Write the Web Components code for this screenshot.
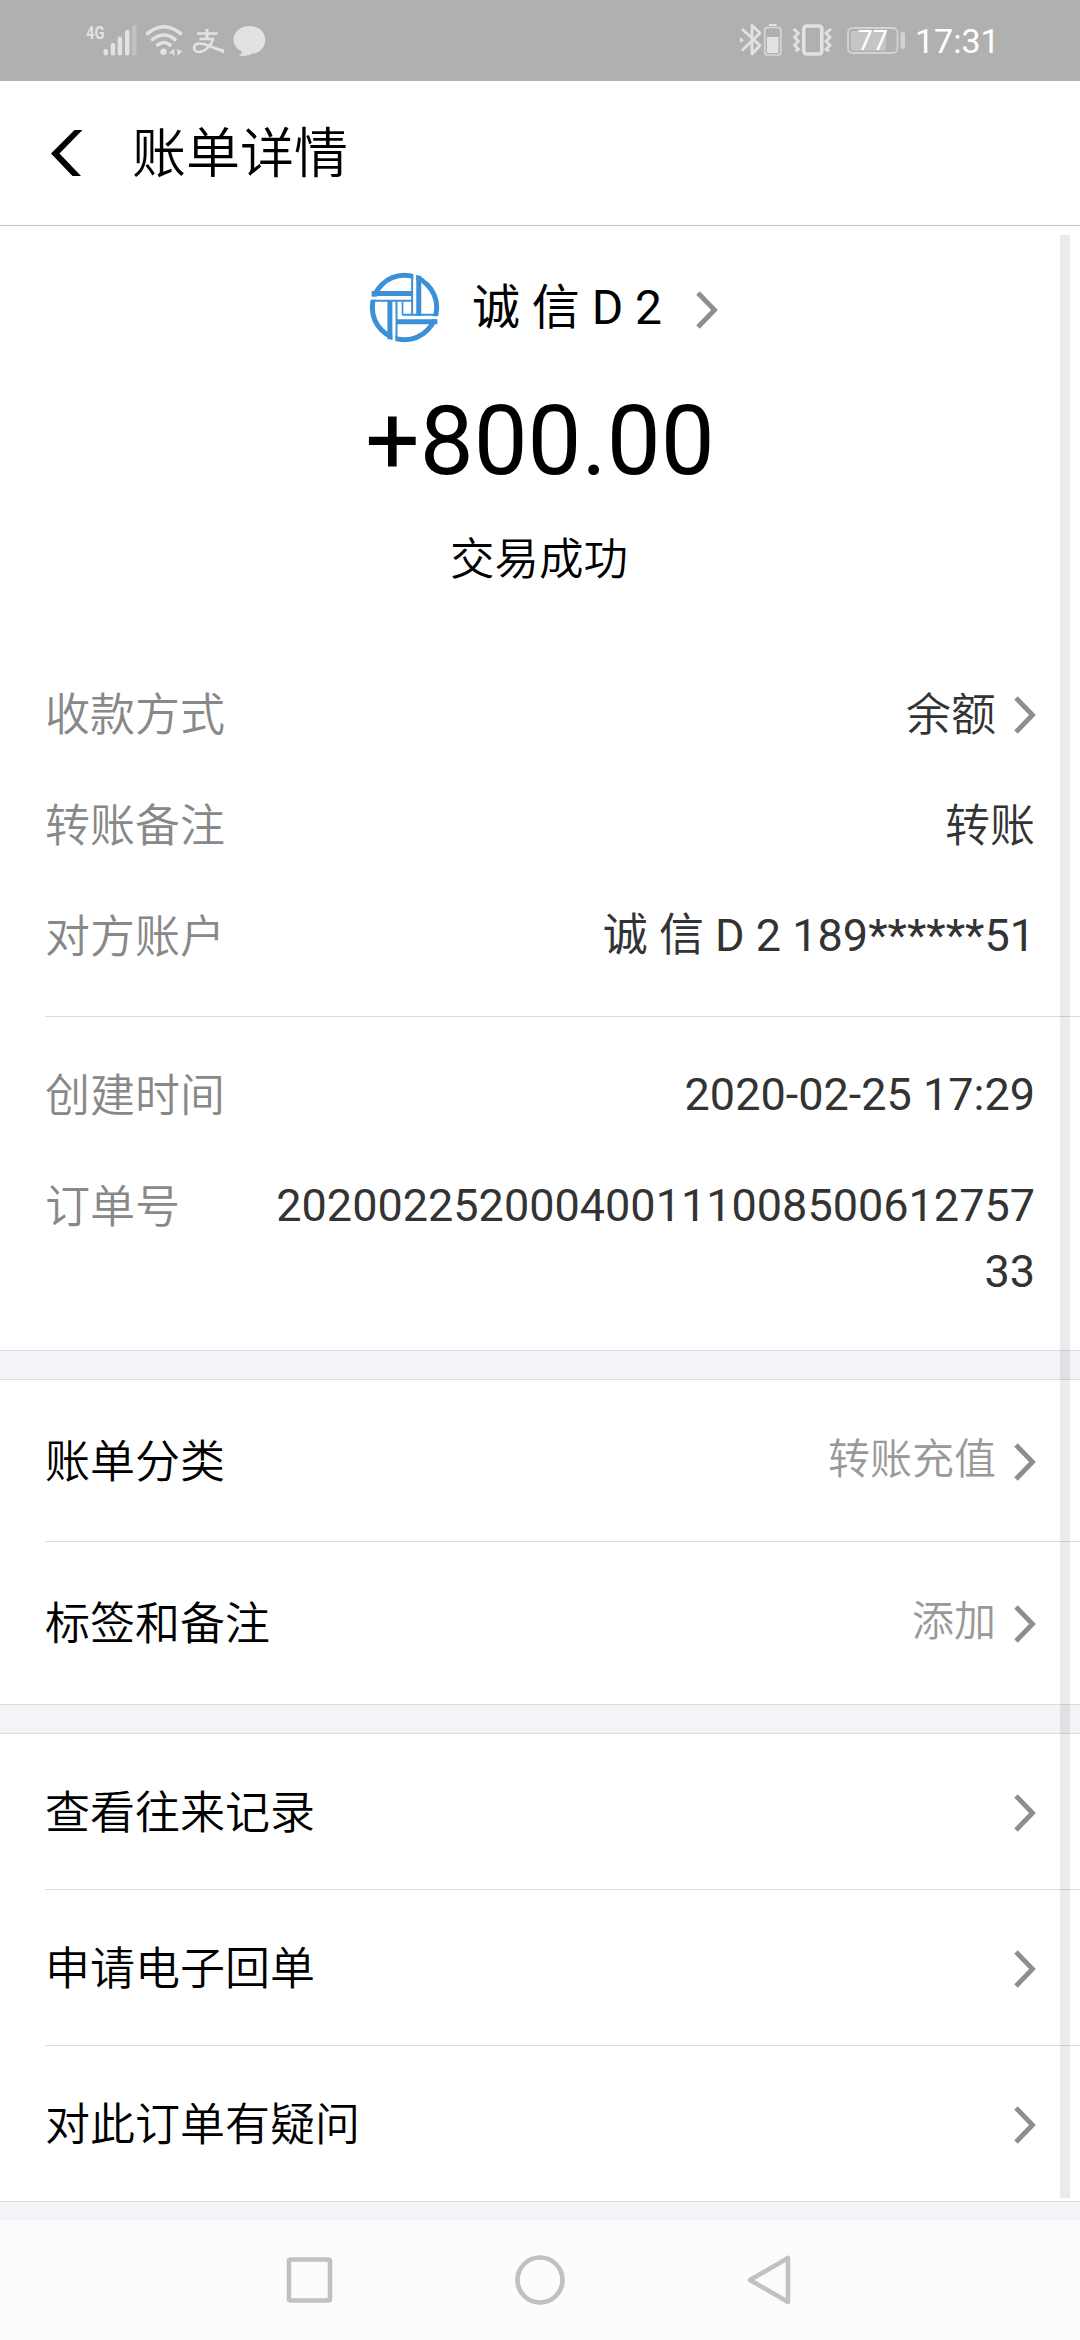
<!DOCTYPE html>
<html lang="zh-CN">
<head>
<meta charset="utf-8">
<title>账单详情</title>
<style>
    body {
        margin: 0;
        background: #fff;
        color: #000;
        font-family: Roboto, "Noto Sans CJK SC", sans-serif;
        font-size: 45px;
        line-height: 66px;
    }
</style>
</head>
<body>
<bill-page>
    <status-bar slot="top" time="17:31" battery="77"></status-bar>
    <page-header slot="top">账单详情</page-header>

    <bill-summary>
        <span slot="name">诚 信 D 2</span>
        <span slot="amount">+800.00</span>
        <span slot="state">交易成功</span>
    </bill-summary>

    <detail-group>
        <detail-row label="收款方式" link han>余额</detail-row>
        <detail-row label="转账备注" han>转账</detail-row>
        <detail-row label="对方账户">诚 信 D 2 189******51</detail-row>
    </detail-group>
    <detail-group last>
        <detail-row label="创建时间">2020-02-25 17:29</detail-row>
        <detail-row label="订单号">20200225200040011100850061275733</detail-row>
    </detail-group>

    <section-gap></section-gap>
    <cell-row tall label="账单分类">转账充值</cell-row>
    <cell-row tall last label="标签和备注">添加</cell-row>

    <section-gap></section-gap>
    <cell-row label="查看往来记录"></cell-row>
    <cell-row label="申请电子回单"></cell-row>
    <cell-row last label="对此订单有疑问"></cell-row>
    <section-gap open></section-gap>

    <nav-bar slot="bottom"></nav-bar>
</bill-page>

<script>
(function() {

    function makeTemplate(html) {
        const template = document.createElement('template');
        template.innerHTML = html;
        return template;
    }

    // shared base, clones the template of the subclass
    class BaseElement extends HTMLElement {
        constructor() {
            super();
            this.attachShadow({mode: 'open'});
            this.shadowRoot.appendChild(this.constructor.template.content.cloneNode(true));
        }

        // copies an attribute into the element with that id
        fill(name) {
            this.shadowRoot.getElementById(name).textContent = this.getAttribute(name) || '';
        }
    }


    class BillPage extends BaseElement {}
    BillPage.template = makeTemplate(`
        <style>
            :host {
                display: flex;
                flex-direction: column;
                height: 2340px;
                overflow: hidden;
            }
            main {
                flex: 1;
                min-height: 0;
                position: relative;
                overflow: hidden;
            }
            .thumb {
                position: absolute;
                top: 9px;
                bottom: 22px;
                right: 10px;
                width: 10px;
                background: rgba(0, 0, 0, 0.08);
            }
        </style>
        <slot name="top"></slot>
        <main>
            <slot></slot>
            <div class="thumb"></div>
        </main>
        <slot name="bottom"></slot>
    `);


    class StatusBar extends BaseElement {
        connectedCallback() {
            this.fill('time');
            this.fill('battery');
        }
    }
    StatusBar.template = makeTemplate(`
        <style>
            :host {
                display: block;
                height: 81px;
                background: #b0b0b0;
            }
            svg {
                display: block;
            }
            text {
                font-family: Roboto, sans-serif;
            }
        </style>
        <svg width="1080" height="81" viewBox="0 0 1080 81" fill="#e2e2e2">
            <text x="86" y="38.500" font-size="19" font-weight="700" textLength="18.500" lengthAdjust="spacingAndGlyphs">4G</text>
            <g id="signal">
                <rect x="103.500" y="49" width="4.500" height="6.500" rx="2"/>
                <rect x="110.700" y="43" width="4.500" height="12.500" rx="2"/>
                <rect x="117.700" y="36.500" width="4.500" height="19" rx="2"/>
                <rect x="125" y="30" width="4.500" height="25.500" rx="2"/>
                <rect x="132" y="25" width="4.500" height="30.500" rx="2" fill="#c2c2c2"/>
            </g>
            <g id="wifi" fill="none" stroke="#e2e2e2" stroke-width="3.600" stroke-linecap="round">
                <path d="M147.500 33.500q16.500-13.500 33 0"/>
                <path d="M152.500 39.500q11.500-9 22.500 0"/>
                <path d="M157.500 45q6.300-5 12.500 0"/>
                <circle cx="163.500" cy="51.700" r="3.200" fill="#e2e2e2" stroke="none"/>
                <path d="M173.800 55v-5.500l-4 3.500h4zM178 49.500v5.500l4-4h-4z" fill="#e2e2e2" stroke-width="1"/>
            </g>
            <g id="pay" fill="none" stroke="#e2e2e2">
                <path d="M197 33.500h20.500M199.500 39h14.500" stroke-width="2.400"/>
                <path d="M207 29v9.500" stroke-width="3.200"/>
                <path d="M213 39c-2 7-8 13-14.500 13c-6 0-6-8.500 1-8.500c8 0 13 4.500 24.500 8" stroke-width="2.700"/>
                <path d="M212 46.500l12 2.800v4.200z" fill="#e2e2e2" stroke="none"/>
            </g>
            <path d="M249.500 26c9 0 15.800 6 15.800 14s-7 13.600-13 13.600c-2 1.500-9 3.400-13.300 2.200c2-1 3-2.500 2.800-4.500c-4.500-2-8.300-6-8.300-11.300c0-8 7-14 16-14z"/>

            <g id="bluetooth" fill="none" stroke="#e2e2e2" stroke-width="2.800" stroke-linejoin="round">
                <path d="M742 29l18 16.500l-8 8.500v-28.500l8 7.500l-18 17.500"/>
                <path d="M740 37.500l4 2.800l-4 2.800z" fill="#e2e2e2" stroke="none"/>
            </g>
            <rect x="769" y="24" width="7.500" height="2"/>
            <rect x="764.800" y="27.500" width="16" height="27.500" rx="2.500" fill="none" stroke="#d8d8d8" stroke-width="1.600"/>
            <rect x="767" y="37" width="11.500" height="16"/>
            <g id="vibrate" fill="none" stroke="#e2e2e2">
                <rect x="803.800" y="26" width="18" height="28" rx="3" stroke-width="3.600"/>
                <path d="M793.500 29l5 4.200l-4 4l4 4l-4 4l4 4l-3 2M831 29l-5 4.200l4 4l-4 4l4 4l-4 4l3 2" stroke-width="2.800"/>
            </g>
            <rect x="848" y="28" width="49.500" height="25" rx="4.500" fill="none" stroke="#d2d2d2" stroke-width="1.800"/>
            <rect x="851" y="31" width="35" height="19.500" rx="2" fill="#c5c5c5"/>
            <rect x="900.500" y="32" width="4.500" height="17" rx="2" fill="#d2d2d2"/>
            <text id="battery" x="857.500" y="49.500" font-size="27" fill="#fff"></text>
            <text id="time" x="915" y="52.500" font-size="34" fill="#fff"></text>
        </svg>
    `);


    class PageHeader extends BaseElement {}
    PageHeader.template = makeTemplate(`
        <style>
            :host {
                display: flex;
                align-items: center;
                height: 144px;
                border-bottom: 1px solid #c2c2c2;
                font-size: 54px;
                font-weight: 350;
            }
            svg {
                margin: 0 49px 0 51px;
            }
            .title {
                padding-top: 3px;
            }
        </style>
        <svg width="32" height="46" viewBox="0 0 32 46">
            <path d="M23.500 0H31.500L8.500 23.500L30 46H21.500L0 23.500z"/>
        </svg>
        <div class="title"><slot></slot></div>
    `);


    class ChevronIcon extends BaseElement {}
    ChevronIcon.template = makeTemplate(`
        <style>
            :host {
                display: block;
                width: 22px;
                height: 38px;
            }
            svg {
                display: block;
            }
        </style>
        <svg width="22" height="38" viewBox="0 0 22 38">
            <path d="M2 2L18.500 19L2 36" fill="none" stroke="#8e8e8e" stroke-width="4.800"/>
        </svg>
    `);


    class BillSummary extends BaseElement {}
    BillSummary.template = makeTemplate(`
        <style>
            :host {
                display: flex;
                flex-direction: column;
                align-items: center;
                padding-top: 45px;
            }
            .payee {
                display: flex;
                align-items: center;
                height: 72px;
                font-size: 48px;
                padding-left: 6px;
            }
            .payee svg {
                margin-right: 31px;
            }
            .payee .name {
                padding-top: 2px;
            }
            .payee chevron-icon {
                margin: 6px 0 0 34px;
            }
            .amount {
                margin-top: 42px;
                font-size: 96px;
                line-height: 112px;
            }
            .state {
                margin-top: 30px;
                margin-bottom: -1px;
                padding-right: 2px;
                font-size: 44.500px;
                font-weight: 350;
            }
        </style>
        <div class="payee">
            <svg width="73" height="73" viewBox="85 62 220 220">
                <circle cx="195" cy="172" r="97" fill="#fff" stroke="#3c90d8" stroke-width="15"/>
                <path d="M85 144H222M226 62V200M305 203H165M163 282V148" fill="none" stroke="#fff" stroke-width="9"/>
                <path d="M96 130H218M238 76V197M294 215H172M151 268V150" fill="none" stroke="#3c90d8" stroke-width="15"/>
                <path d="M218 72V196M290 194H188M171 272V152M96 152H216" fill="none" stroke="#3c90d8" stroke-width="6"/>
                <path d="M189 154V194" fill="none" stroke="#3c90d8" stroke-width="5"/>
            </svg>
            <div class="name"><slot name="name"></slot></div>
            <chevron-icon></chevron-icon>
        </div>
        <div class="amount"><slot name="amount"></slot></div>
        <div class="state"><slot name="state"></slot></div>
    `);


    class DetailGroup extends BaseElement {}
    DetailGroup.template = makeTemplate(`
        <style>
            :host {
                display: flex;
                flex-direction: column;
                gap: 45px;
                margin-left: 45px;
                padding: 89px 45px 47px 0;
                border-bottom: 1px solid #ddd;
            }
            :host([last]) {
                padding-top: 45px;
                padding-bottom: 45px;
                border-bottom: none;
            }
        </style>
        <slot></slot>
    `);


    class DetailRow extends BaseElement {
        connectedCallback() {
            this.fill('label');
        }
    }
    // "han" marks a value with no latin text in it
    DetailRow.template = makeTemplate(`
        <style>
            :host {
                display: flex;
                align-items: flex-start;
                justify-content: space-between;
                min-height: 66px;
                color: #333;
            }
            #label {
                flex: none;
                color: #888;
                font-weight: 350;
                margin: 2px 0 -2px;
            }
            .value {
                width: 760px;
                text-align: right;
                word-break: break-all;
            }
            chevron-icon {
                display: none;
            }
            :host([han]) .value {
                margin: 2px 0 -2px;
                font-weight: 350;
            }
            :host([link]) .value {
                flex: 1;
            }
            :host([link]) chevron-icon {
                display: block;
                margin: 15px -1px 0 18px;
            }
        </style>
        <div id="label"></div>
        <div class="value"><slot></slot></div>
        <chevron-icon></chevron-icon>
    `);


    class CellRow extends BaseElement {
        connectedCallback() {
            this.fill('label');
        }
    }
    CellRow.template = makeTemplate(`
        <style>
            :host {
                display: flex;
                align-items: center;
                height: 155px;
                margin-left: 45px;
                padding-right: 44px;
                border-bottom: 1px solid #ddd;
            }
            :host([tall]) {
                height: 161px;
            }
            :host([last]) {
                border-bottom: none;
            }
            :host([tall][last]) {
                height: 162px;
            }
            #label {
                flex: 1;
                font-weight: 350;
                padding-top: 4px;
            }
            .value {
                color: #999;
                font-size: 42px;
                font-weight: 350;
                padding-bottom: 2px;
            }
            chevron-icon {
                margin: 2px 0 0 18px;
            }
        </style>
        <div id="label"></div>
        <div class="value"><slot></slot></div>
        <chevron-icon></chevron-icon>
    `);


    class SectionGap extends BaseElement {}
    SectionGap.template = makeTemplate(`
        <style>
            :host {
                display: block;
                height: 28px;
                background: #f4f3f8;
                border-top: 1px solid #dcdcdc;
                border-bottom: 1px solid #dcdcdc;
            }
            :host([open]) {
                border-bottom: none;
            }
        </style>
    `);


    class NavBar extends BaseElement {}
    NavBar.template = makeTemplate(`
        <style>
            :host {
                display: flex;
                align-items: center;
                justify-content: center;
                gap: 180px;
                height: 120px;
                background: #fcfcfc;
            }
        </style>
        <svg width="50" height="50" viewBox="0 0 50 50" fill="none" stroke="#c1c1c1" stroke-width="4.600">
            <rect x="4" y="4.500" width="41" height="41" rx="1.500"/>
        </svg>
        <svg width="50" height="50" viewBox="0 0 50 50" fill="none" stroke="#c1c1c1" stroke-width="4.600">
            <circle cx="25" cy="25" r="22.500"/>
        </svg>
        <svg width="50" height="50" viewBox="0 0 50 50" fill="none" stroke="#c1c1c1" stroke-width="4.600" stroke-linejoin="round">
            <path d="M43 3V47L5 25z"/>
        </svg>
    `);


    customElements.define('chevron-icon', ChevronIcon);
    customElements.define('status-bar', StatusBar);
    customElements.define('page-header', PageHeader);
    customElements.define('bill-summary', BillSummary);
    customElements.define('detail-group', DetailGroup);
    customElements.define('detail-row', DetailRow);
    customElements.define('cell-row', CellRow);
    customElements.define('section-gap', SectionGap);
    customElements.define('nav-bar', NavBar);
    customElements.define('bill-page', BillPage);
})();
</script>
</body>
</html>
